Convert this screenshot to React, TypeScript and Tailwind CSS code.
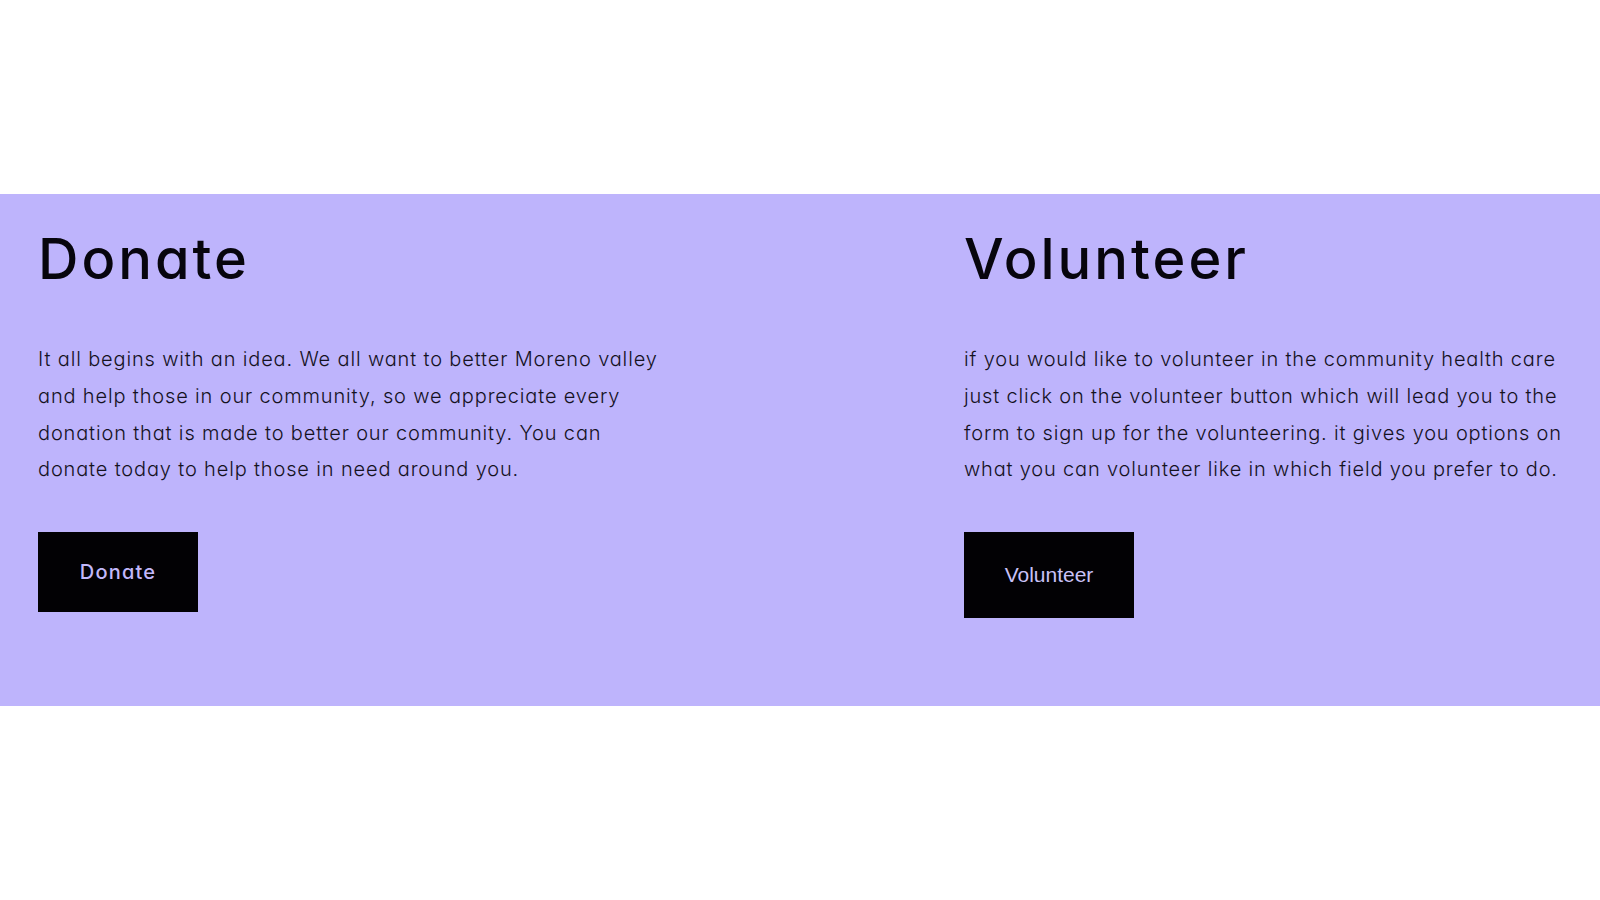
import React from "react";

export default function App() {
  const font = "font-['Inter','Noto_Sans',sans-serif] [font-feature-settings:'cv11']";
  return (
    <div className={`w-[1600px] h-[900px] bg-white flex flex-col ${font}`}>
      <div className="h-[194px] shrink-0" />
      <section className="h-[512px] shrink-0 bg-[#beb4fc] flex">
        <div className="w-[964px] shrink-0 pl-[38px] pt-[38px]">
          <h2 className="text-[56px] leading-[55px] font-medium text-[#07050d] tracking-[3px]">Donate</h2>
          <p className="mt-[54px] text-[20px] leading-[36.8px] font-light text-[#15121f] tracking-[0.85px] whitespace-nowrap">
            It all begins with an idea. We all want to better Moreno valley<br />
            and help those in our community, so we appreciate every<br />
            donation that is made to better our community. You can<br />
            donate today to help those in need around you.
          </p>
          <button className="mt-[44px] w-[160px] h-[80px] bg-[#020104] text-[#c2b8fb] text-[20px] tracking-[1.2px] font-medium flex items-center justify-center">
            Donate
          </button>
        </div>
        <div className="w-[620px] shrink-0 pt-[38px]">
          <h2 className="text-[56px] leading-[55px] font-medium text-[#07050d] tracking-[3px]">Volunteer</h2>
          <p className="mt-[54px] text-[20px] leading-[36.8px] font-light text-[#15121f] tracking-[0.82px] whitespace-nowrap">
            if you would like to volunteer in the community health care<br />
            just click on the volunteer button which will lead you to the<br />
            form to sign up for the volunteering. it gives you options on<br />
            what you can volunteer like in which field you prefer to do.
          </p>
          <button className="mt-[44px] w-[170px] h-[86px] bg-[#020104] text-[#c9c2f7] text-[21px] font-['Liberation_Sans',Arial,sans-serif] flex items-center justify-center">
            Volunteer
          </button>
        </div>
      </section>
      <div className="flex-1" />
    </div>
  );
}
